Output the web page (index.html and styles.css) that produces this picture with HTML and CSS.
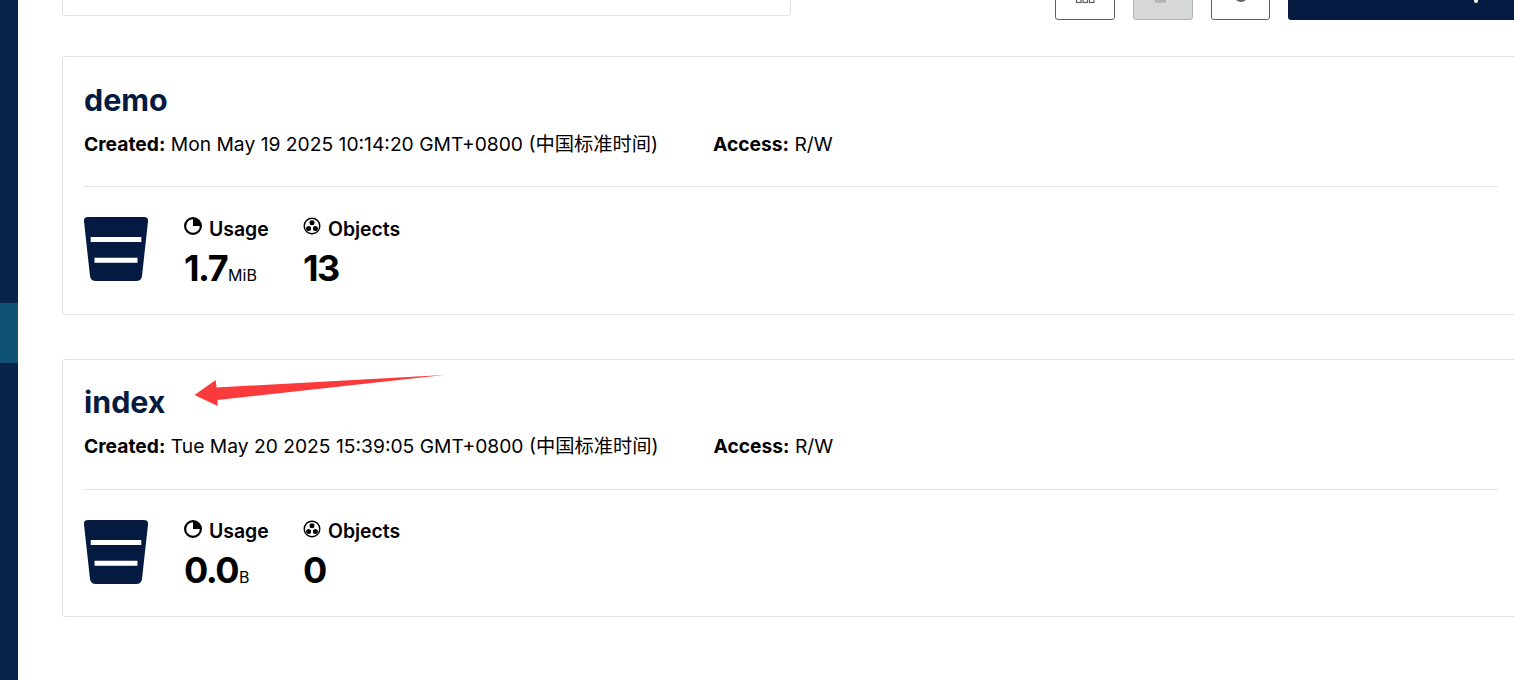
FILE: index.html
```html
<!DOCTYPE html>
<html lang="en">
<head>
    <meta charset="UTF-8">
    <title>Buckets</title>
    <link rel="stylesheet" href="styles.css">
</head>
<body>
    <div class="app">
        <div class="sidebar">
            <div class="sidebar-active"></div>
        </div>
        <div class="content">
            <div class="toolbar">
                <div class="search-box"></div>
                <div class="actions">
                    <div class="icon-btn">
                        <svg width="20" height="20" viewBox="0 0 20 20" fill="none" stroke="#5f5f5f" stroke-width="1.2"><rect x="1.500" y="-1" width="4.500" height="4.500"/><rect x="8" y="-1" width="4.500" height="4.500"/><rect x="14.500" y="-1" width="4.500" height="4.500"/></svg>
                    </div>
                    <div class="icon-btn disabled">
                        <svg width="20" height="20" viewBox="0 0 20 20" fill="#b4b4b4"><rect x="2" y="-8" width="11" height="11.700" rx="1"/></svg>
                    </div>
                    <div class="icon-btn narrow">
                        <svg width="20" height="20" viewBox="0 0 20 20" fill="none" stroke="#5f5f5f" stroke-width="2"><circle cx="10" cy="-4" r="6"/></svg>
                    </div>
                    <div class="create-btn">
                        <span class="create-label">Create Bucket</span>
                        <svg width="10" height="10" viewBox="0 0 10 10" fill="#fff"><circle cx="5" cy="2" r="2"/></svg>
                    </div>
                </div>
            </div>

            <div class="bucket-card">
                <h2 class="bucket-name">demo</h2>
                <div class="bucket-meta">
                    <div class="meta-created"><strong>Created:</strong> Mon May 19 2025 10:14:20 GMT+0800 (中国标准时间)</div>
                    <div><strong>Access:</strong> R/W</div>
                </div>
                <hr class="divider">
                <div class="bucket-stats">
                    <svg class="bucket-icon" width="64" height="64" viewBox="0 0 64 64"><path fill="#051a40" d="M4 0H60Q64.500 0 64 4.500L58 59Q57.500 64 52 64H12Q6.500 64 6 59L0 4.500Q-.5 0 4 0Z"/><path fill="#fff" d="M6.700 20H57.300V25H6.700ZM10.500 40.700H53.500V45.700H10.500Z"/></svg>
                    <div class="stat stat-usage">
                        <div class="stat-label">
                            <svg class="stat-icon" width="18" height="18" viewBox="0 0 18 18"><circle cx="9" cy="9" r="7.900" fill="none" stroke="#000" stroke-width="2.200"/><path d="M9 9V1A8 8 0 0 1 17 9Z" fill="#000"/></svg>
                            Usage
                        </div>
                        <div class="stat-value">1.7<span class="stat-unit">MiB</span></div>
                    </div>
                    <div class="stat">
                        <div class="stat-label">
                            <svg class="stat-icon" width="18" height="18" viewBox="0 0 18 18"><circle cx="9" cy="9" r="7.800" fill="none" stroke="#000" stroke-width="1.400"/><circle cx="9" cy="5.800" r="2.500"/><circle cx="5.600" cy="11.400" r="2.500"/><circle cx="12.400" cy="11.400" r="2.500"/></svg>
                            Objects
                        </div>
                        <div class="stat-value">13</div>
                    </div>
                </div>
            </div>

            <div class="bucket-card">
                <h2 class="bucket-name">index</h2>
                <div class="bucket-meta">
                    <div class="meta-created"><strong>Created:</strong> Tue May 20 2025 15:39:05 GMT+0800 (中国标准时间)</div>
                    <div><strong>Access:</strong> R/W</div>
                </div>
                <hr class="divider">
                <div class="bucket-stats">
                    <svg class="bucket-icon" width="64" height="64" viewBox="0 0 64 64"><path fill="#051a40" d="M4 0H60Q64.500 0 64 4.500L58 59Q57.500 64 52 64H12Q6.500 64 6 59L0 4.500Q-.5 0 4 0Z"/><path fill="#fff" d="M6.700 20H57.300V25H6.700ZM10.500 40.700H53.500V45.700H10.500Z"/></svg>
                    <div class="stat stat-usage">
                        <div class="stat-label">
                            <svg class="stat-icon" width="18" height="18" viewBox="0 0 18 18"><circle cx="9" cy="9" r="7.900" fill="none" stroke="#000" stroke-width="2.200"/><path d="M9 9V1A8 8 0 0 1 17 9Z" fill="#000"/></svg>
                            Usage
                        </div>
                        <div class="stat-value">0.0<span class="stat-unit">B</span></div>
                    </div>
                    <div class="stat">
                        <div class="stat-label">
                            <svg class="stat-icon" width="18" height="18" viewBox="0 0 18 18"><circle cx="9" cy="9" r="7.800" fill="none" stroke="#000" stroke-width="1.400"/><circle cx="9" cy="5.800" r="2.500"/><circle cx="5.600" cy="11.400" r="2.500"/><circle cx="12.400" cy="11.400" r="2.500"/></svg>
                            Objects
                        </div>
                        <div class="stat-value">0</div>
                    </div>
                </div>
            </div>
        </div>
    </div>

    <!-- red annotation arrow drawn over the second card -->
    <svg class="arrow" width="260" height="40" viewBox="0 0 260 40"><path fill="#fb3a3c" d="M250 1L22.500 13.500L21.700 6L0.500 21L23.700 32L23.500 26Z"/></svg>
</body>
</html>
```

FILE: styles.css
```css
html, body {
    margin: 0;
    height: 100%;
    overflow: hidden;
    background-color: #fff;
}
body {
    font-family: Inter, "Noto Sans CJK SC", sans-serif;
    color: #000;
}
.app {
    display: flex;
    height: 680px;
    overflow: hidden;
}
.sidebar {
    flex: 0 0 18px;
    background-color: #0a2449;
    padding-top: 303px;
    box-sizing: border-box;
}
.sidebar-active {
    height: 60px;
    background-color: #0f5273;
}
.content {
    flex: 0 0 1502px;
    padding-left: 44px;
    box-sizing: border-box;
}
.toolbar {
    display: flex;
    justify-content: space-between;
    align-items: flex-end;
    height: 20px;
    margin-bottom: 36px;
}
.search-box {
    flex: none;
    width: 729px;
    height: 30px;
    margin-bottom: 4px;
    border: 1px solid #e2e2e2;
    border-radius: 3px;
    box-sizing: border-box;
}
.actions {
    flex: none;
    display: flex;
    gap: 18px;
    overflow: hidden;
    height: 21px;
    align-items: flex-end;
}
.icon-btn {
    flex: none;
    width: 60px;
    height: 40px;
    border: 1px solid #5f5f5f;
    border-radius: 3px;
    box-sizing: border-box;
    display: flex;
    justify-content: center;
    align-items: flex-end;
    overflow: hidden;
}
.icon-btn.narrow {
    width: 59px;
}
.icon-btn.disabled {
    border-color: #b4b4b4;
    background-color: #d6d7d7;
}
.create-btn {
    flex: none;
    width: 232px;
    height: 40px;
    background-color: #051a40;
    border-radius: 3px;
    color: #fff;
    font-size: 16px;
    box-sizing: border-box;
    padding-left: 42px;
    display: flex;
    align-items: flex-end;
    gap: 21px;
}
.create-label {
    line-height: 14px;
    margin-bottom: 21px;
    letter-spacing: 1px;
}
.create-btn svg {
    margin-bottom: 11px;
}
.bucket-card {
    width: 1458px;
    height: 258.6px;
    border: 1px solid #e2e2e2;
    border-radius: 3px;
    padding: 21px;
    box-sizing: border-box;
    margin-bottom: 44px;
}
.bucket-name {
    margin: -0.3px 0 0;
    font-size: 30.4px;
    line-height: 44px;
    font-weight: 700;
    color: #051a40;
}
.bucket-meta {
    display: flex;
    margin-top: 10px;
    font-size: 19.25px;
    line-height: 24px;
}
.bucket-meta strong {
    font-weight: 700;
}
.meta-created {
    margin-right: 55px;
}
.divider {
    border: 0;
    border-top: 1px solid #e2e2e2;
    margin: 30.5px 0 30px;
}
.bucket-stats {
    display: flex;
}
.bucket-icon {
    margin-right: 36px;
}
.stat-usage {
    width: 119px;
}
.stat-label {
    display: flex;
    align-items: center;
    gap: 7px;
    font-size: 19.4px;
    line-height: 24px;
    font-weight: 600;
    margin-top: -0.5px;
}
.stat-icon {
    flex: none;
    margin-top: -5px;
}
.stat-value {
    font-size: 36px;
    line-height: 40px;
    font-weight: 700;
    letter-spacing: -1.5px;
    margin-top: 7px;
}
.stat-unit {
    font-size: 16px;
    font-weight: 400;
    letter-spacing: 0;
    margin-left: 1px;
}
.arrow {
    position: absolute;
    left: 194px;
    top: 374px;
}
```
